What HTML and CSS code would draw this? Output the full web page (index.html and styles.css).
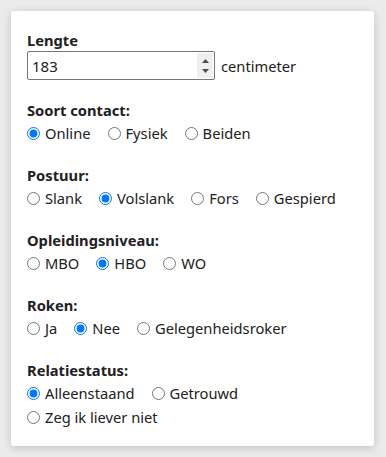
FILE: index.html
```html
<!DOCTYPE html>
<html lang="nl">
<head>
    <meta charset="UTF-8">
    <title>Profiel</title>
    <link rel="stylesheet" href="styles.css">
</head>
<body>
    <form class="kaart">
        <div class="veld">
            <label class="kop" for="lengte">Lengte</label>
            <div class="invoer">
                <div class="getal">
                    <input type="number" id="lengte" name="lengte" value="183">
                    <span class="spin">
                        <svg width="7" height="4" viewBox="0 0 7 4"><path d="M0 4 L3.5 0 L7 4 Z" fill="#4d4d4d"/></svg>
                        <svg width="7" height="4" viewBox="0 0 7 4"><path d="M0 0 L7 0 L3.5 4 Z" fill="#4d4d4d"/></svg>
                    </span>
                </div>
                <span>centimeter</span>
            </div>
        </div>

        <div class="veld">
            <div class="kop">Soort contact:</div>
            <div class="opties">
                <label><input type="radio" name="contact" checked> Online</label>
                <label><input type="radio" name="contact"> Fysiek</label>
                <label><input type="radio" name="contact"> Beiden</label>
            </div>
        </div>

        <div class="veld">
            <div class="kop">Postuur:</div>
            <div class="opties">
                <label><input type="radio" name="postuur"> Slank</label>
                <label><input type="radio" name="postuur" checked> Volslank</label>
                <label><input type="radio" name="postuur"> Fors</label>
                <label><input type="radio" name="postuur"> Gespierd</label>
            </div>
        </div>

        <div class="veld">
            <div class="kop">Opleidingsniveau:</div>
            <div class="opties">
                <label><input type="radio" name="opleiding"> MBO</label>
                <label><input type="radio" name="opleiding" checked> HBO</label>
                <label><input type="radio" name="opleiding"> WO</label>
            </div>
        </div>

        <div class="veld">
            <div class="kop">Roken:</div>
            <div class="opties">
                <label><input type="radio" name="roken"> Ja</label>
                <label><input type="radio" name="roken" checked> Nee</label>
                <label><input type="radio" name="roken"> Gelegenheidsroker</label>
            </div>
        </div>

        <div class="veld">
            <div class="kop">Relatiestatus:</div>
            <div class="opties">
                <label><input type="radio" name="relatie" checked> Alleenstaand</label>
                <label><input type="radio" name="relatie"> Getrouwd</label>
            </div>
            <div class="opties">
                <label><input type="radio" name="relatie"> Zeg ik liever niet</label>
            </div>
        </div>
    </form>
</body>
</html>
```

FILE: styles.css
```css
body {
    margin: 0;
    padding: 11px;
    background-color: #ebebeb;
    font-family: "Noto Sans", "Open Sans", sans-serif;
    font-size: 14.7px;
    color: #212121;
}
.kaart {
    width: 363px;
    box-sizing: border-box;
    padding: 18px 16px 17px;
    background-color: white;
    border-radius: 3px;
    box-shadow: 0 2px 8px rgba(0, 0, 0, 0.18);
}
.veld {
    margin-bottom: 19px;
}
.veld:last-child {
    margin-bottom: 0;
}
.kop {
    display: block;
    font-weight: bold;
    line-height: 22px;
}
.invoer {
    display: flex;
    align-items: center;
    gap: 6px;
}
.getal {
    position: relative;
    height: 29px;
}
.getal input {
    width: 188px;
    height: 29px;
    box-sizing: border-box;
    margin: 0;
    padding: 0 4px;
    border: 1px solid #767676;
    border-radius: 2px;
    font-family: inherit;
    font-size: 15px;
    color: #212121;
}
.getal input::-webkit-inner-spin-button {
    display: none;
}
.spin {
    position: absolute;
    top: 2px;
    right: 2px;
    width: 16px;
    height: 25px;
    background-color: #efefef;
    display: flex;
    flex-direction: column;
    align-items: center;
    justify-content: center;
    gap: 6px;
}
.spin svg {
    display: block;
}
.opties {
    display: flex;
    gap: 17px;
    height: 24px;
    align-items: center;
}
.opties label {
    display: flex;
    align-items: center;
}
.opties input {
    width: 13px;
    height: 13px;
    margin: 0 5px 0 0;
}
```
